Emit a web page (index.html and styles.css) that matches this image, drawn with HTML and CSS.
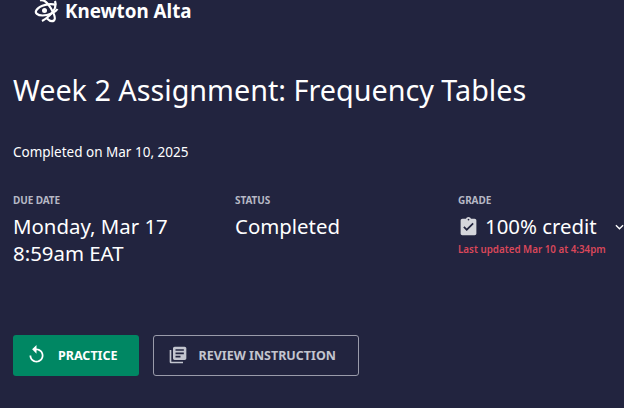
FILE: index.html
```html
<!DOCTYPE html>
<html lang="en">
<head>
    <meta charset="UTF-8">
    <meta name="viewport" content="width=device-width, initial-scale=1.0">
    <title>Week 2 Assignment: Frequency Tables</title>
    <link rel="stylesheet" href="styles.css">
</head>
<body>
    <div class="brand">
        <svg class="brand-icon" viewBox="0 0 26 24" fill="none" stroke="#fff" stroke-width="2.200">
            <path d="M22 6C16 4 6 6 2.500 11c-2 3 1 5.500 6 5.500 6 0 13-3 15-6.500"/>
            <path d="M6 1.500c4-2 8 3 11 8s5 10 3 12c-2 1.500-5 0-7-2"/>
            <path d="M21 2c2 5-1 10-5 14-3 3-6 5-8 6"/>
            <circle cx="10.500" cy="11.500" r="2.500" fill="#fff" stroke="none"/>
        </svg>
        <span>Knewton Alta</span>
    </div>

    <h1 class="title">Week 2 Assignment: Frequency Tables</h1>
    <p class="completed">Completed on Mar 10, 2025</p>

    <div class="details">
        <div class="detail">
            <div class="label">DUE DATE</div>
            <div class="value">Monday, Mar 17<br>8:59am EAT</div>
        </div>
        <div class="detail">
            <div class="label">STATUS</div>
            <div class="value">Completed</div>
        </div>
        <div class="detail">
            <div class="label">GRADE</div>
            <div class="grade-row">
                <svg class="clipboard" viewBox="0 0 24 24">
                    <path fill="#d5d6dc" d="M19 3h-4.200C14.400 1.800 13.300 1 12 1s-2.400.8-2.800 2H5c-1.100 0-2 .9-2 2v15c0 1.100.9 2 2 2h14c1.100 0 2-.9 2-2V5c0-1.100-.9-2-2-2zm-7 0c.6 0 1 .4 1 1s-.4 1-1 1-1-.4-1-1 .4-1 1-1zm-2 14l-4-4 1.400-1.400L10 14.200l6.600-6.600L18 9l-8 8z"/>
                </svg>
                <span class="value">100% credit</span>
                <svg class="chevron" viewBox="0 0 10 6" fill="none" stroke="#fff" stroke-width="1.500">
                    <path d="M1 1l4 4 4-4"/>
                </svg>
            </div>
            <div class="updated">Last updated Mar 10 at 4:34pm</div>
        </div>
    </div>

    <div class="actions">
        <button class="btn btn-primary">
            <svg class="btn-icon" viewBox="0 0 24 24">
                <path fill="#fff" d="M12 5V1L7 6l5 5V7c3.300 0 6 2.700 6 6s-2.700 6-6 6-6-2.700-6-6H4c0 4.400 3.600 8 8 8s8-3.600 8-8-3.600-8-8-8z"/>
            </svg>
            PRACTICE
        </button>
        <button class="btn btn-outline">
            <svg class="btn-icon" viewBox="0 0 24 24">
                <path fill="#c3c5cf" d="M4 6H2v14c0 1.100.9 2 2 2h14v-2H4V6zm16-4H8c-1.100 0-2 .9-2 2v12c0 1.100.9 2 2 2h12c1.100 0 2-.9 2-2V4c0-1.100-.9-2-2-2zm-1 9H9V9h10v2zm-4 4H9v-2h6v2zm4-8H9V5h10v2z"/>
            </svg>
            REVIEW INSTRUCTION
        </button>
    </div>
</body>
</html>
```

FILE: styles.css
```css
body {
    font-family: 'Noto Sans', sans-serif;
    margin: 0;
    width: 624px;
    height: 408px;
    overflow: hidden;
    background-color: #22243f;
    color: #fff;
}
.brand {
    display: flex;
    align-items: center;
    gap: 5px;
    padding-left: 34px;
    height: 22px;
    font-size: 18.800px;
    line-height: 22px;
    font-weight: 700;
}
.brand-icon {
    width: 26px;
    height: 24px;
}
.title {
    margin: 49px 0 0 13px;
    font-size: 28.750px;
    line-height: 38px;
    font-weight: 400;
}
.completed {
    margin: 33px 0 0 13px;
    font-size: 13.500px;
    line-height: 20px;
}
.details {
    display: grid;
    grid-template-columns: 222px 223px 1fr;
    margin: 31px 0 0 13px;
}
.label {
    font-size: 10px;
    line-height: 14px;
    font-weight: 700;
    letter-spacing: -0.1px;
    color: #b6b8c5;
}
.value {
    font-size: 20.400px;
    line-height: 27px;
    margin-top: 6px;
}
.grade-row {
    display: flex;
    align-items: center;
}
.clipboard {
    width: 21px;
    height: 21px;
    margin-right: 6px;
    margin-top: 5px;
}
.chevron {
    width: 9px;
    height: 6px;
    margin: 6px 0 0 18px;
}
.updated {
    margin-top: 3px;
    font-size: 9.800px;
    line-height: 14px;
    font-weight: 600;
    color: #d9475a;
}
.actions {
    display: flex;
    gap: 14px;
    margin: 68px 0 0 13px;
}
.btn {
    display: flex;
    align-items: center;
    height: 41px;
    font-family: inherit;
    font-size: 12.500px;
    font-weight: 700;
    border-radius: 3px;
}
.btn-icon {
    margin-right: 11px;
}
.btn-primary {
    padding: 0 21px 0 13px;
    background-color: #008763;
    border: none;
    color: #fff;
}
.btn-primary .btn-icon {
    width: 21px;
    height: 21px;
    margin-bottom: 2px;
}
.btn-outline {
    padding: 0 22px 0 14px;
    background-color: transparent;
    border: 1px solid #9a9baa;
    color: #c3c5cf;
}
.btn-outline .btn-icon {
    width: 20px;
    height: 20px;
    margin-bottom: 1px;
}
```
